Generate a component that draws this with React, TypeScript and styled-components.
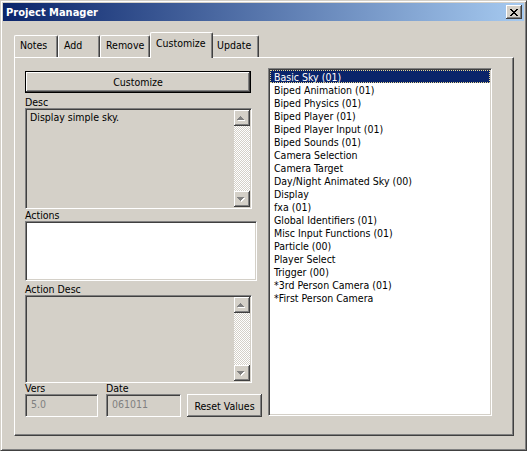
import React from "react";
import styled, { createGlobalStyle, css } from "styled-components";

const FONT = `"DejaVu Sans Condensed", "Liberation Sans", Arial, sans-serif`;

const GlobalStyle = createGlobalStyle`
  html, body { margin: 0; padding: 0; background: #d4d0c8; }
  body { font-family: ${FONT}; font-size: 10.5px; color: #000; }
  *, *::before, *::after { box-sizing: border-box; }
`;

const raised = css`
  box-shadow: inset -1px -1px #404040, inset 1px 1px #fff,
    inset -2px -2px #808080, inset 2px 2px #d4d0c8;
`;

const Window = styled.div`
  width: 527px;
  height: 451px;
  display: flex;
  flex-direction: column;
  background: #d4d0c8;
  border: 1px solid;
  border-color: #d4d0c8 #404040 #404040 #d4d0c8;
  box-shadow: inset 1px 1px #fff, inset -1px -1px #808080;
  padding: 2px;
`;

const TitleBar = styled.div`
  height: 18px;
  flex: none;
  display: flex;
  align-items: center;
  padding: 0 2px 0 3px;
  background: linear-gradient(to right, #0a246a, #a6caf0);
  color: #fff;
  font-weight: bold;
  font-size: 11px;
`;

const TitleText = styled.span`
  flex: 1;
  white-space: nowrap;
`;

const CloseButton = styled.div`
  width: 16px;
  height: 14px;
  background: #d4d0c8;
  ${raised};
  display: flex;
  align-items: center;
  justify-content: center;
`;

const Body = styled.div`
  flex: 1;
  display: flex;
  flex-direction: column;
  padding: 11px 10px 12px 11px;
`;

const TabStrip = styled.div`
  height: 25px;
  flex: none;
  display: flex;
  align-items: flex-end;
`;

const Tab = styled.div<{ $w: number; $active?: boolean }>`
  position: relative;
  flex: none;
  width: ${(p) => p.$w}px;
  height: ${(p) => (p.$active ? 26 : 22)}px;
  margin-bottom: ${(p) => (p.$active ? -1 : 0)}px;
  margin-right: ${(p) => (p.$active ? -2 : 0)}px;
  z-index: ${(p) => (p.$active ? 2 : 1)};
  background: #d4d0c8;
  border-top: 1px solid #fff;
  border-left: 1px solid #fff;
  border-right: 1px solid #404040;
  border-radius: 2px 2px 0 0;
  box-shadow: inset -1px 0 #808080;
  padding: ${(p) => (p.$active ? 4 : 3)}px 0 0 5px;
  line-height: 13px;
  white-space: nowrap;
`;

const Panel = styled.div`
  flex: 1;
  display: flex;
  align-items: flex-start;
  gap: 6px;
  border: 1px solid;
  border-color: #fff #404040 #404040 #fff;
  box-shadow: inset -1px -1px #808080;
  padding: 10px 0 0 10px;
`;

const LeftColumn = styled.div`
  width: 237px;
  margin-top: 3px;
  display: flex;
  flex-direction: column;
  align-items: flex-start;
`;

const DefaultButton = styled.div`
  width: 226px;
  height: 22px;
  border: 1px solid #000;
  ${raised};
  display: flex;
  align-items: center;
  justify-content: center;
`;

const PushButton = styled.div<{ $w: number; $h: number }>`
  width: ${(p) => p.$w}px;
  height: ${(p) => p.$h}px;
  ${raised};
  display: flex;
  align-items: center;
  justify-content: center;
  white-space: nowrap;
`;

const Label = styled.div<{ $h: number; $mt?: number }>`
  height: ${(p) => p.$h}px;
  line-height: ${(p) => p.$h}px;
  margin-top: ${(p) => p.$mt ?? 0}px;
  white-space: nowrap;
`;

const Field = styled.div<{ $w: number; $h: number; $white?: boolean }>`
  width: ${(p) => p.$w}px;
  height: ${(p) => p.$h}px;
  flex: none;
  border: 1px solid;
  border-color: #808080 #fff #fff #808080;
  box-shadow: inset 1px 1px #404040, inset -1px -1px #d4d0c8;
  padding: 1px;
  background: ${(p) => (p.$white ? "#fff" : "#d4d0c8")};
  display: flex;
`;

const FieldText = styled.div<{ $disabled?: boolean }>`
  flex: 1;
  padding: 1px 0 0 3px;
  line-height: 13px;
  color: ${(p) => (p.$disabled ? "#808080" : "#000")};
  white-space: nowrap;
`;

const EditText = styled(FieldText)`
  padding: 1px 0 0 4px;
  line-height: 14px;
`;

const ScrollBar = styled.div`
  width: 16px;
  flex: none;
  display: flex;
  flex-direction: column;
`;

const ScrollButton = styled.div`
  width: 16px;
  height: 16px;
  flex: none;
  background: #d4d0c8;
  ${raised};
  display: flex;
  align-items: center;
  justify-content: center;
`;

const ScrollTrack = styled.div`
  flex: 1;
  background-color: #fff;
  background-image: repeating-conic-gradient(#d4d0c8 0 25%, #fff 0 50%);
  background-size: 2px 2px;
`;

const BottomRow = styled.div`
  display: flex;
  align-items: flex-end;
`;

const Group = styled.div<{ $ml?: number }>`
  display: flex;
  flex-direction: column;
  margin-left: ${(p) => p.$ml ?? 0}px;
`;

const ListBox = styled(Field)`
  flex-direction: column;
`;

const ListItem = styled.div<{ $selected?: boolean }>`
  height: 13px;
  flex: none;
  padding: 1px 0 0 4px;
  line-height: 12px;
  white-space: nowrap;
  background: ${(p) => (p.$selected ? "#0a246a" : "transparent")};
  color: ${(p) => (p.$selected ? "#fff" : "#000")};
  outline: ${(p) => (p.$selected ? "1px dotted #e9d78f" : "none")};
  outline-offset: -1px;
`;

const Arrow = ({ up }: { up?: boolean }) => {
  const rows = [0, 1, 2, 3];
  const draw = (dx: number, dy: number, fill: string) =>
    rows.map((r) => {
      const y = up ? 6 + r : 6 + (3 - r);
      return (
        <rect
          key={fill + r}
          x={7 - r + dx - 1}
          y={y + dy}
          width={2 * r + 1}
          height={1}
          fill={fill}
        />
      );
    });
  return (
    <svg width="16" height="16" viewBox="0 0 16 16" shapeRendering="crispEdges">
      {draw(1, 1, "#fff")}
      {draw(0, 0, "#808080")}
    </svg>
  );
};

const Scroll = () => (
  <ScrollBar>
    <ScrollButton>
      <Arrow up />
    </ScrollButton>
    <ScrollTrack />
    <ScrollButton>
      <Arrow />
    </ScrollButton>
  </ScrollBar>
);

const CloseGlyph = () => (
  <svg width="8" height="7" viewBox="0 0 8 7" shapeRendering="crispEdges">
    {[
      [0, 0], [1, 0], [6, 0], [7, 0],
      [1, 1], [2, 1], [5, 1], [6, 1],
      [2, 2], [3, 2], [4, 2], [5, 2],
      [3, 3], [4, 3],
      [2, 4], [3, 4], [4, 4], [5, 4],
      [1, 5], [2, 5], [5, 5], [6, 5],
      [0, 6], [1, 6], [6, 6], [7, 6],
    ].map(([x, y]) => (
      <rect key={`${x}-${y}`} x={x} y={y} width={1} height={1} fill="#000" />
    ))}
  </svg>
);

const tabs = [
  { label: "Notes", w: 44 },
  { label: "Add", w: 42 },
  { label: "Remove", w: 50 },
  { label: "Customize", w: 63, active: true },
  { label: "Update", w: 48 },
];

const items = [
  "Basic Sky (01)",
  "Biped Animation (01)",
  "Biped Physics (01)",
  "Biped Player (01)",
  "Biped Player Input (01)",
  "Biped Sounds (01)",
  "Camera Selection",
  "Camera Target",
  "Day/Night Animated Sky (00)",
  "Display",
  "fxa (01)",
  "Global Identifiers (01)",
  "Misc Input Functions (01)",
  "Particle (00)",
  "Player Select",
  "Trigger (00)",
  "*3rd Person Camera (01)",
  "*First Person Camera",
];

export default function App() {
  return (
    <>
      <GlobalStyle />
      <Window>
        <TitleBar>
          <TitleText>Project Manager</TitleText>
          <CloseButton>
            <CloseGlyph />
          </CloseButton>
        </TitleBar>
        <Body>
          <TabStrip>
            {tabs.map((t) => (
              <Tab key={t.label} $w={t.w} $active={t.active}>
                {t.label}
              </Tab>
            ))}
          </TabStrip>
          <Panel>
            <LeftColumn>
              <DefaultButton>Customize</DefaultButton>
              <Label $h={12} $mt={3}>Desc</Label>
              <Field $w={227} $h={101}>
                <FieldText>Display simple sky.</FieldText>
                <Scroll />
              </Field>
              <Label $h={12}>Actions</Label>
              <Field $w={232} $h={60} $white />
              <Label $h={12} $mt={2}>Action Desc</Label>
              <Field $w={227} $h={88}>
                <FieldText />
                <Scroll />
              </Field>
              <BottomRow>
                <Group>
                  <Label $h={11}>Vers</Label>
                  <Field $w={73} $h={23}>
                    <EditText $disabled>5.0</EditText>
                  </Field>
                </Group>
                <Group $ml={8}>
                  <Label $h={11}>Date</Label>
                  <Field $w={75} $h={23}>
                    <EditText $disabled>061011</EditText>
                  </Field>
                </Group>
                <Group $ml={6}>
                  <PushButton $w={75} $h={23}>Reset Values</PushButton>
                </Group>
              </BottomRow>
            </LeftColumn>
            <ListBox $w={224} $h={348} $white>
              {items.map((it, i) => (
                <ListItem key={it} $selected={i === 0}>
                  {it}
                </ListItem>
              ))}
            </ListBox>
          </Panel>
        </Body>
      </Window>
    </>
  );
}
